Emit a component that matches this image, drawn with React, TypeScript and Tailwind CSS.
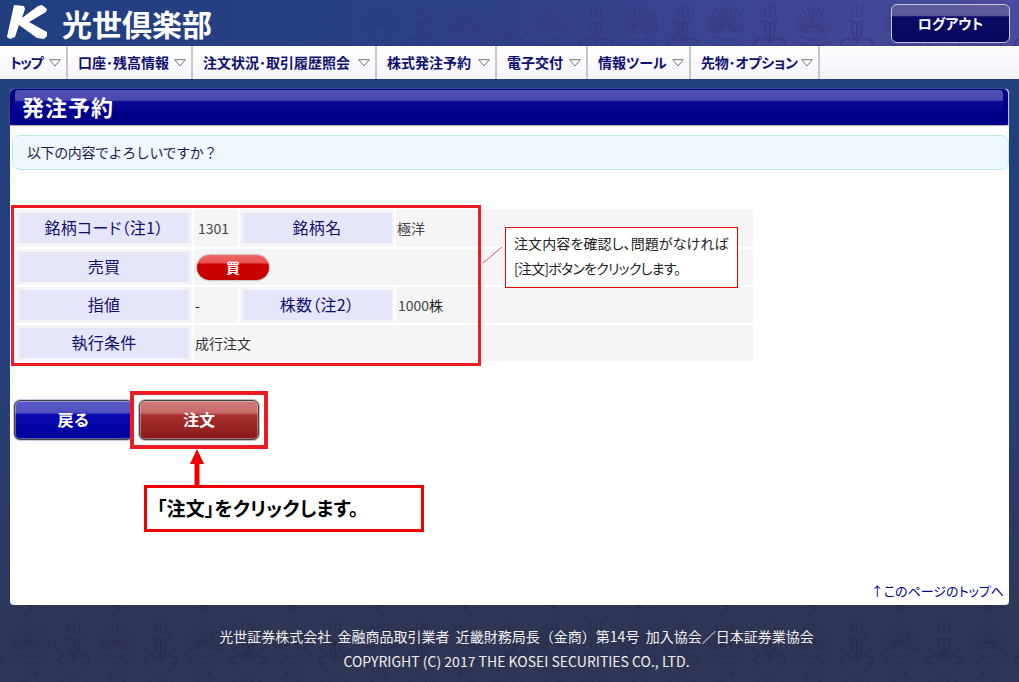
const navItems = [
  { label: "トップ", width: "w-[68px]", fit: "tracking-[-1.5px]" },
  { label: "口座･残高情報", width: "w-[125px]", fit: "" },
  { label: "注文状況･取引履歴照会", width: "w-[184px]", fit: "" },
  { label: "株式発注予約", width: "w-[120px]", fit: "" },
  { label: "電子交付", width: "w-[91px]", fit: "" },
  { label: "情報ツール", width: "w-[103px]", fit: "" },
  { label: "先物･オプション", width: "w-[129px]", fit: "tracking-[-0.2px]" },
];

const fanAngles = [-84, -72, -60, -48, -36, -24, -12, 0, 12, 24, 36, 48, 60, 72, 84];

// damask wallpaper behind the header and footer
function Damask({ id, color, y, className = "" }: { id: string; color: string; y: number; className?: string }) {
  return (
    <svg className={`absolute inset-0 w-full h-full ${className}`} aria-hidden="true">
      <defs>
        <pattern id={id} width="87" height="92" patternUnits="userSpaceOnUse" x="74" y={y}>
          <g stroke={color} fill="none" strokeWidth="2">
            {fanAngles.map(a => {
              const r = (a * Math.PI) / 180;
              const len = 29 - (11 * Math.abs(a)) / 84;
              return (
                <line
                  key={a}
                  x1={43.5 + 6 * Math.sin(r)}
                  y1={33 - 6 * Math.cos(r)}
                  x2={43.5 + len * Math.sin(r)}
                  y2={33 - len * Math.cos(r)}
                  strokeDasharray="2 1"
                />
              );
            })}
            <path d="M31 36c4 5 21 5 25 0M26 42c6 5 29 5 35 0" strokeDasharray="2 1" />
            {/* small motif between the fans */}
            <path d="M0 4v14M-5 6v10M5 6v10M82 6v10M87 4v14M92 6v10" strokeDasharray="2 1" />
            <path d="M-8 20c4 4 12 4 16 0M79 20c4 4 12 4 16 0" />
            <path d="M0 24v20M87 24v20M-5 26c0 6 2 12 5 16M5 26c0 6-2 12-5 16M82 26c0 6 2 12 5 16M92 26c0 6-2 12-5 16" />
            <path d="M-4 40c-6-3-11-1-12 4 0 3 3 4 5 2M4 40c6-3 11-1 12 4 0 3-3 4-5 2M83 40c-6-3-11-1-12 4 0 3 3 4 5 2M91 40c6-3 11-1 12 4 0 3-3 4-5 2" />
            {/* lower half, offset by half a repeat */}
            <path d="M43.5 50v10M38.500 52v8M48.500 52v8" strokeDasharray="2 1" />
            <path d="M36 64c4 4 11 4 15 0M43.500 66v18M38 68c0 6 2 12 5 16M49 68c0 6-2 12-5 16" />
            {[-60, -36, -12, 12, 36, 60].flatMap(a => {
              const r = (a * Math.PI) / 180;
              return [0, 87].map(cx => (
                <line
                  key={`${a}-${cx}`}
                  x1={cx + 5 * Math.sin(r)}
                  y1={82 - 5 * Math.cos(r)}
                  x2={cx + 22 * Math.sin(r)}
                  y2={82 - 22 * Math.cos(r)}
                  strokeDasharray="2 1"
                />
              ));
            })}
          </g>
        </pattern>
      </defs>
      <rect width="100%" height="100%" fill={`url(#${id})`} />
    </svg>
  );
}

function NavItem({ label, width, fit }: { label: string; width: string; fit: string }) {
  return (
    <div className={`${width} shrink-0 h-full flex items-center justify-between pl-[10px] pr-[5px] border-r-2 border-[#c8c8c8] bg-gradient-to-b from-white to-[#f4f4fc]`}>
      <span className={`text-[14px] font-bold text-[#10106e] whitespace-nowrap [font-feature-settings:'palt'] ${fit}`}>{label}</span>
      <svg width="12" height="8" viewBox="0 0 12 8" className="shrink-0">
        <path d="M0.7 0.7h10.6L6 7z" fill="none" stroke="#777" strokeWidth="1" />
      </svg>
    </div>
  );
}

function Label({ children, className = "" }: { children: React.ReactNode; className?: string }) {
  return (
    <div className={`h-[30px] pb-[2px] flex items-center justify-center bg-[#e6e6fa] text-[#10106e] text-[16px] tracking-[0.3px] [font-feature-settings:'palt'] ${className}`}>
      {children}
    </div>
  );
}

function Row({ children, className = "" }: { children: React.ReactNode; className?: string }) {
  return <div className={`flex gap-[2px] ${className}`}>{children}</div>;
}

function Cell({ children, className = "" }: { children?: React.ReactNode; className?: string }) {
  return <div className={`bg-[#f5f5f5] flex items-center ${className}`}>{children}</div>;
}

export default function App() {
  return (
    <div
      className="w-[1019px] h-[682px] overflow-hidden flex flex-col bg-gradient-to-b from-[#21407f] via-[#24407c] to-[#2e3555] text-[#222]"
      style={{ fontFamily: '"Noto Sans CJK JP", "Noto Sans", sans-serif' }}
    >
      {/* Header */}
      <header className="relative h-[46px] shrink-0 bg-gradient-to-r from-[#1f3f80] via-[#2f4088] to-[#4a4a9e] flex items-center justify-between pl-[7px] pr-[9px]">
        <Damask id="head-damask" y={0} color="rgba(58,48,122,0.55)" className="[mask-image:linear-gradient(to_right,transparent_25%,black_60%)]" />
        <div className="relative flex items-center gap-[14px]">
          <svg width="41" height="36" viewBox="0 0 41 36" className="shrink-0 self-start mt-[-4px]">
            <path
              d="M7 2L17 3L18 6L15 15L31 3L35 2L40 6L39 9L22 19L40 29L40 33L37 36L30 35L12 22L8 34L3 36L0 34L1 29z"
              fill="#fff"
            />
          </svg>
          <span className="text-[30px] leading-none font-bold text-white">光世倶楽部</span>
        </div>
        <button className="relative w-[119px] h-[39px] rounded-[6px] border border-[#c9c9d6] bg-[linear-gradient(#5c5a9a_0,#5c5a9a_28%,#0c0c66_32%,#06065e_100%)] text-white text-[14px] font-bold [font-feature-settings:'palt']">
          ログアウト
        </button>
      </header>

      {/* Nav */}
      <nav className="h-[33px] shrink-0 flex bg-gradient-to-b from-white to-[#f1f1fb]">
        {navItems.map(item => (
          <NavItem key={item.label} {...item} />
        ))}
      </nav>

      {/* Main panel */}
      <main className="relative flex-1 mt-[10px] ml-[10px] mr-[10px] bg-white rounded-[4px] flex flex-col">
        <div className="h-[36px] shrink-0 mr-[1px] pb-[2px] rounded-t-[4px] border border-[#00008b] bg-[linear-gradient(#4f4fb4_0,#4a4aae_30%,#0c0c98_34%,#00008b_70%,#00008b_100%)] shadow-[inset_4px_0_0_#00008b,inset_-4px_0_0_#00008b,0_1px_1px_#aaa,1px_0_1px_#bbb] flex items-center pl-[11px]">
          <h1 className="text-[22px] font-bold text-white tracking-[1px]">発注予約</h1>
        </div>

        <div className="mt-[10px] ml-[2px] h-[35px] shrink-0 rounded-[8px] border border-[#b8ecec] bg-[#f0f8ff] flex items-center pl-[14px] text-[14px] tracking-[-0.4px] text-[#1a1a50]">
          以下の内容でよろしいですか？
        </div>

        {/* Order details */}
        <div className="relative mt-[39px] ml-[4px] w-[739px] flex flex-col gap-[2px]">
          <Row className="h-[38px]">
            <Cell className="w-[178px] pl-[5px]"><Label className="w-[170px]">銘柄コード（注1）</Label></Cell>
            <Cell className="w-[44px] pl-[4px] text-[14px] text-[#444]">1301</Cell>
            <Cell className="w-[154px] justify-center"><Label className="w-[149px]">銘柄名</Label></Cell>
            <Cell className="flex-1 pl-[1px] text-[14px] text-[#444]">極洋</Cell>
          </Row>
          <Row className="h-[36px]">
            <Cell className="w-[178px] pl-[5px]"><Label className="w-[170px]">売買</Label></Cell>
            <Cell className="flex-1 pl-[3px]">
              <div className="w-[72px] h-[25px] rounded-full shadow-[0_0_2px_#555] bg-[linear-gradient(#f06a6a_0,#e85050_30%,#cc0000_38%,#c40000_100%)] flex items-center justify-center text-white text-[14px] font-bold">
                買
              </div>
            </Cell>
          </Row>
          <Row className="h-[36px]">
            <Cell className="w-[178px] pl-[5px]"><Label className="w-[170px]">指値</Label></Cell>
            <Cell className="w-[44px] pl-[1px] text-[14px]">-</Cell>
            <Cell className="w-[154px] justify-center"><Label className="w-[149px]">株数（注2）</Label></Cell>
            <Cell className="flex-1 pl-[2px] text-[14px] text-[#444]">1000<span className="text-[#222]">株</span></Cell>
          </Row>
          <Row className="h-[36px]">
            <Cell className="w-[178px] pl-[5px]"><Label className="w-[170px]">執行条件</Label></Cell>
            <Cell className="flex-1 pl-[1px] text-[14px] text-[#333]">成行注文</Cell>
          </Row>

          {/* Red annotation over the table */}
          <div className="absolute left-[-3px] top-[-4px] w-[470px] h-[161px] border-[3px] border-[#ed1c24]" />
          <svg className="absolute left-[468px] top-[36px]" width="24" height="20" aria-hidden="true">
            <line x1="1" y1="18" x2="20" y2="2" stroke="#f0505a" strokeWidth="1" />
          </svg>
          <div className="absolute left-[491px] top-[18px] w-[233px] h-[61px] border border-[#f00000] bg-white pl-[8px] pt-[3px] text-[14px] leading-[25px] [font-feature-settings:'palt']">
            <div className="whitespace-nowrap tracking-[0.1px]">注文内容を確認し、問題がなければ</div>
            <div className="whitespace-nowrap tracking-[-0.8px]">[注文]ボタンをクリックします。</div>
          </div>
        </div>

        {/* Buttons */}
        <div className="relative mt-[39px] ml-[4px] flex gap-[6px]">
          <button className="w-[119px] h-[40px] pb-[2px] rounded-[6px] border border-[#444] shadow-[0_0_0_1px_#c8c8e0,inset_0_0_0_1px_rgba(255,255,255,0.35)] bg-[linear-gradient(#5a5ac8_0,#5050c0_30%,#0808b0_36%,#00009a_100%)] text-white text-[16px] font-bold">
            戻る
          </button>
          <button className="w-[120px] h-[40px] pb-[2px] rounded-[6px] border border-[#444] shadow-[0_0_0_1px_#c8b8c0,inset_0_0_0_1px_rgba(255,255,255,0.35)] bg-[linear-gradient(#cf7a7a_0,#c86a6a_30%,#a83030_38%,#8a1818_100%)] text-white text-[16px] font-bold">
            注文
          </button>

          {/* Red annotation and arrow over the buttons */}
          <div className="absolute left-[116px] top-[-9px] w-[138px] h-[58px] border-[4px] border-[#ed1c24]" />
          <svg className="absolute left-[176px] top-[49px]" width="14" height="36" viewBox="0 0 14 36" aria-hidden="true">
            <path d="M7 0L14 15H9.5V36H4.5V15H0z" fill="#f00000" />
          </svg>
          <div className="absolute left-[130px] top-[85px] w-[280px] h-[47px] border-[3px] border-[#f00000] bg-white flex items-center pl-[10px] text-[19px] font-bold tracking-[0.1px] text-black [font-feature-settings:'palt']">
            「注文」をクリックします。
          </div>
        </div>

        <a className="absolute right-[5px] bottom-[5px] text-[13px] text-[#00008b] [font-feature-settings:'palt']">↑このページのトップへ</a>
      </main>

      {/* Footer */}
      <footer className="relative h-[77px] shrink-0 bg-[#2e3555] flex flex-col items-center pt-[21px] pl-[14px] text-[14px] text-[#f0f0f0]">
        <Damask id="foot-damask" y={12} color="rgba(36,40,68,0.5)" />
        <p className="relative leading-[20px] whitespace-pre">光世証券株式会社  金融商品取引業者  近畿財務局長（金商）第14号  加入協会／日本証券業協会</p>
        <p className="relative mt-[5px] leading-[20px]">COPYRIGHT (C) 2017 THE KOSEI SECURITIES CO., LTD.</p>
      </footer>
    </div>
  );
}
